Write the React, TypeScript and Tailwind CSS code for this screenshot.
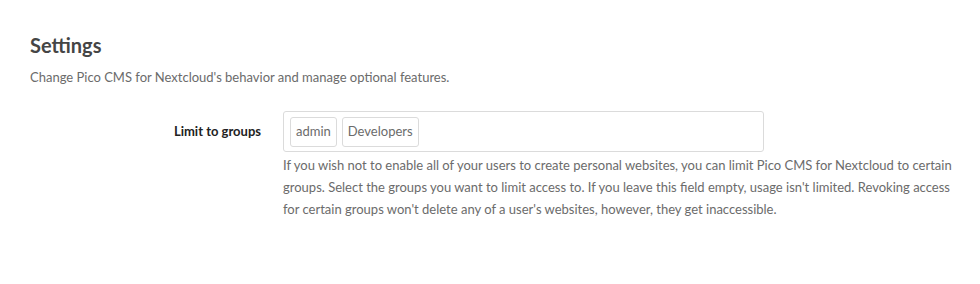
import React from "react";

export default function App() {
  return (
    <div className="w-[980px] h-[284px] bg-white" style={{ fontFamily: 'Lato, sans-serif' }}>
      <div className="pt-[30px] pl-[30px] pr-[20px]">
        <h2 className="text-[20px] leading-[30px] font-bold text-[#454545]">Settings</h2>
        <p className="mt-[7px] text-[13px] leading-[20px] text-[#6b6b6b]">
          Change Pico CMS for Nextcloud's behavior and manage optional features.
        </p>
        <div className="mt-[24px] flex">
          <div className="w-[253px] shrink-0 text-right pr-[22px] pt-[10px] text-[13px] leading-[20px] font-bold text-[#222]">
            Limit to groups
          </div>
          <div className="flex-1">
            <div className="w-[481px] h-[41px] border border-[#dbdbdb] rounded-[3px] flex items-center gap-[5px] px-[6px]">
              <span className="h-[30px] px-[5px] border border-[#dbdbdb] rounded-[3px] flex items-center text-[13px] text-[#6b6b6b]">admin</span>
              <span className="h-[30px] px-[5px] border border-[#dbdbdb] rounded-[3px] flex items-center text-[13px] text-[#6b6b6b]">Developers</span>
            </div>
            <p className="mt-[2px] text-[13px] leading-[22px] text-[#6b6b6b]">
              If you wish not to enable all of your users to create personal websites, you can limit Pico CMS for Nextcloud to certain groups. Select the groups you want to limit access to. If you leave this field empty, usage isn't limited. Revoking access for certain groups won't delete any of a user's websites, however, they get inaccessible.
            </p>
          </div>
        </div>
      </div>
    </div>
  );
}
